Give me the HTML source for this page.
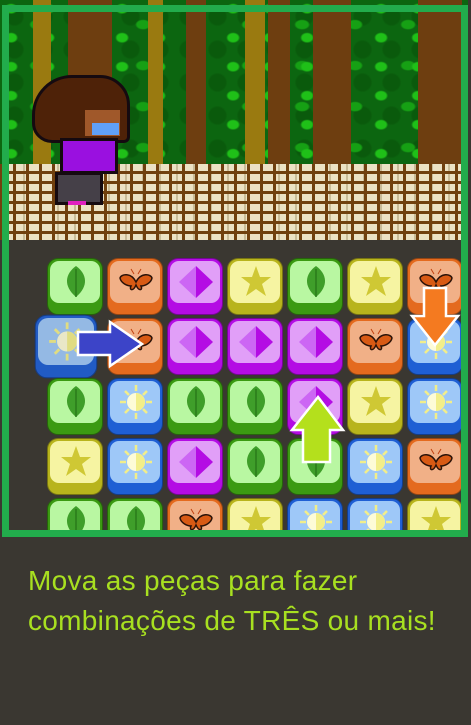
<!DOCTYPE html>
<html><head><meta charset="utf-8"><style>
*{margin:0;padding:0;box-sizing:border-box}
body{width:471px;height:725px;background:#3a3731;position:relative;overflow:hidden;font-family:"Liberation Sans",sans-serif}
.abs{position:absolute}
#scene{left:0;top:0;width:471px;height:240px;overflow:hidden}
.forest{left:0;top:0;width:471px;height:166px;background:#0c6610;
background-image:radial-gradient(ellipse at 30% 30%,#1fc018 0 5px,transparent 7px),radial-gradient(ellipse at 70% 60%,#16a014 0 6px,transparent 8px),radial-gradient(circle at 50% 50%,#0a5a0c 0 8px,transparent 10px);background-size:37px 29px,53px 41px,29px 33px}
.trunk{position:absolute;top:0;height:166px}
.gravel{left:0;top:164px;width:471px;height:76px;background:#ece2c4;
background-image:linear-gradient(90deg,#70400e 0 3px,transparent 3px),linear-gradient(0deg,#70400e 0 3px,transparent 3px),linear-gradient(90deg,transparent 0 6px,#c9bc98 6px 8px,transparent 8px);background-size:13px 100%,100% 10px,17px 100%}
.tile{position:absolute;width:56px;height:57px;border-radius:11px;border:1px solid rgba(0,0,0,.35)}
.tile .f{position:absolute;left:2px;right:2px;top:2px;height:42px;border-radius:9px}
.tile svg{position:absolute;left:11px;top:5px}
.g{background:#3b9a12}.g .f{background:#b9f7a2}
.o{background:#e46a1e}.o .f{background:#f1b087}
.p{background:#b40ce4}.p .f{background:#e19ff8}
.y{background:#b8b41c}.y .f{background:#f6f4a2}
.b{background:#1f5fd4}.b .f{background:#9ec8f8}
#frame{left:2px;top:5px;width:466px;height:532px;border:7px solid #22ac4c}
.txt{left:28px;color:#a8e020;font-size:28px;letter-spacing:0.3px;white-space:nowrap}
</style></head><body>
<div id="scene" class="abs">
 <div class="abs forest"></div>
 <div class="trunk" style="left:33px;width:18px;background:#9a7a10"></div>
 <div class="trunk" style="left:68px;width:44px;background:#6e3e10"></div>
 <div class="trunk" style="left:148px;width:15px;background:#9a7a10"></div>
 <div class="trunk" style="left:186px;width:20px;background:#6e3e10"></div>
 <div class="trunk" style="left:245px;width:20px;background:#9a7a10"></div>
 <div class="trunk" style="left:268px;width:22px;background:#6e3e10"></div>
 <div class="trunk" style="left:313px;width:38px;background:#6e3e10"></div>
 <div class="trunk" style="left:418px;width:44px;background:#6e3e10"></div>
 <div class="abs gravel"></div>
 <!-- character -->
 <div class="abs" style="left:32px;top:75px;width:98px;height:68px;background:#4e2208;border-radius:40px 30px 6px 20px;border:3px solid #150a10"></div>
 <div class="abs" style="left:85px;top:110px;width:35px;height:26px;background:#a0582a"></div>
 <div class="abs" style="left:92px;top:123px;width:27px;height:12px;background:#60a0f8"></div>
 <div class="abs" style="left:60px;top:138px;width:58px;height:36px;background:#9a10e0;border:3px solid #150a10"></div>
 <div class="abs" style="left:55px;top:172px;width:48px;height:33px;background:#454048;border:3px solid #150a10"></div>
 <div class="abs" style="left:68px;top:201px;width:18px;height:4px;background:#e020c0"></div>
</div>

<div id="tiles"></div>
<script>
const grid=["gopygyo","bopppob","gbggpyb","ybpggbo","ggoybby"];
const xs=[47,107,167,227,287,347,407],ys=[258,318,378,438,498];
const icon={
g:'<svg width="34" height="36" viewBox="0 0 34 36"><path d="M17 2 C28 10 30 22 17 33 C4 22 6 10 17 2Z" fill="#3f9e2a"/><path d="M17 5V33" stroke="#2a7a1a" stroke-width="1.5"/></svg>',
o:'<svg width="34" height="36" viewBox="0 0 34 36"><path d="M17 18 C12 8 2 10 1 14 C2 19 8 22 12 22 C10 26 14 28 17 21 C20 28 24 26 22 22 C26 22 32 19 33 14 C32 10 22 8 17 18Z" fill="#d85a14" stroke="#2a1208" stroke-width="1.5"/><path d="M15 10L12 5M19 10L22 5" stroke="#c04010"/></svg>',
p:'<svg width="34" height="36" viewBox="0 0 34 36"><path d="M0 18L17 2L17 34Z" fill="#cc66f4"/><path d="M17 2L34 18L17 34Z" fill="#b40ce4"/></svg>',
y:'<svg width="34" height="36" viewBox="0 0 34 36"><path d="M17 2L21 13L32 13L23 20L27 32L17 25L7 32L11 20L2 13L13 13Z" fill="#cfc834"/></svg>',
b:'<svg width="34" height="36" viewBox="0 0 34 36"><g stroke="#f2ee8a" stroke-width="2.5"><path d="M17 1V7M17 29V35M1 18H7M27 18H33M6 7L10 11M28 7L24 11M6 29L10 25M28 29L24 25"/></g><circle cx="17" cy="18" r="9" fill="#fdfbd8"/><path d="M17 9A9 9 0 0 1 17 27Z" fill="#f2ee8a"/></svg>'};
let h='';
grid.forEach((r,ri)=>[...r].forEach((c,ci)=>{
 let x=xs[ci],y=ys[ri],extra='';
 if(ri==1&&ci==0){x=38;extra='transform:scale(1.12);opacity:.9;';}
 h+=`<div class="tile ${c}" style="left:${x}px;top:${y}px;${extra}"><div class="f"></div>${icon[c]}</div>`;
}));
document.getElementById('tiles').innerHTML=h;
</script>
<div class="abs" style="left:0;top:537px;width:471px;height:188px;background:#3a3731"></div>
<div class="abs" style="left:468px;top:0;width:3px;height:540px;background:#3a3731"></div>
<svg class="abs" style="left:0;top:0" width="471" height="540">
 <path d="M78 332H110V322L142 344L110 366V355H78Z" fill="#3c44c8" stroke="#fff" stroke-width="2.5"/>
 <path d="M424 288H446V316H458L435 345L412 316H424Z" fill="#f47a20" stroke="#fff" stroke-width="2.5"/>
 <path d="M318 397L343 430H330V462H303V430H292Z" fill="#b4e01c" stroke="#fff" stroke-width="2.5"/>
</svg>
<div id="frame" class="abs"></div>
<div class="abs txt" style="top:565px">Mova as peças para fazer</div>
<div class="abs txt" style="top:605px">combinações de TRÊS ou mais!</div>
</body></html>
